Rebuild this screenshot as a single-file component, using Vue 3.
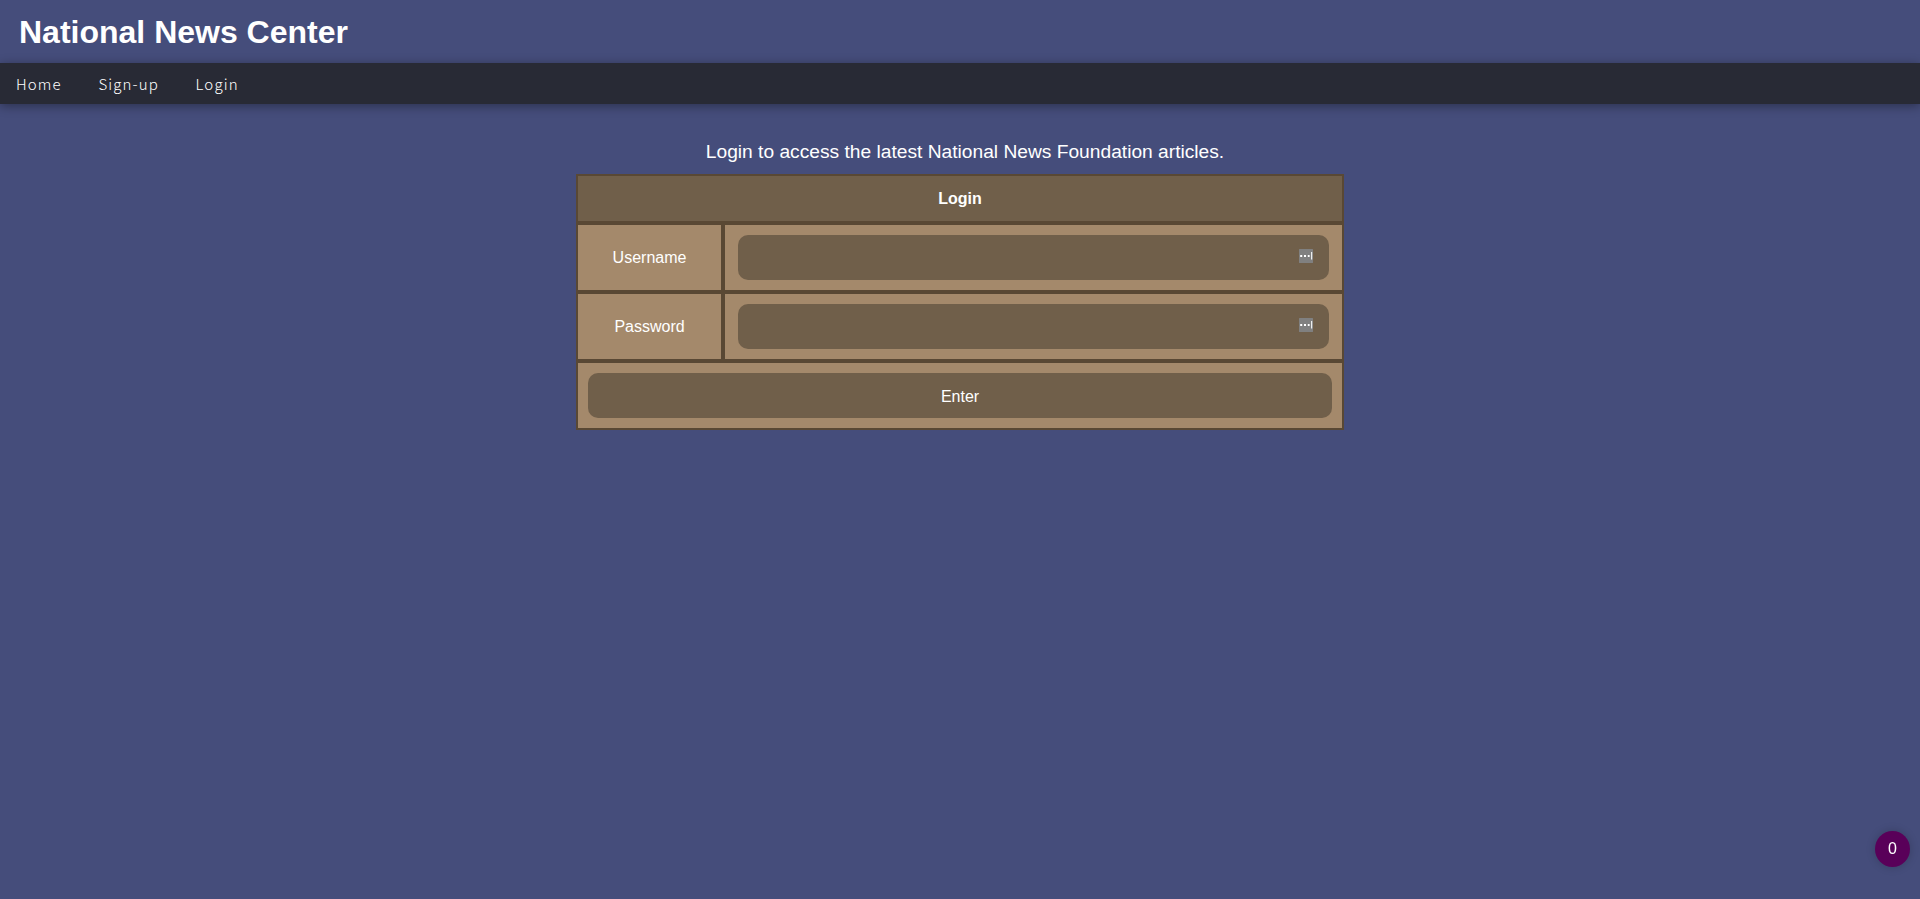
<script setup>
const links = ['Home', 'Sign-up', 'Login']
const fields = [
  { label: 'Username', type: 'text' },
  { label: 'Password', type: 'password' },
]
</script>

<template>
  <div class="page">
    <header class="title"><h1>National News Center</h1></header>
    <nav class="nav">
      <a v-for="link in links" :key="link">{{ link }}</a>
    </nav>
    <main>
      <p class="intro">Login to access the latest National News Foundation articles.</p>
      <form class="panel" @submit.prevent>
        <div class="head">Login</div>
        <template v-for="field in fields" :key="field.label">
          <label class="name">{{ field.label }}</label>
          <div class="cell">
            <div class="field">
              <input :type="field.type" />
              <svg class="key" width="14" height="14" viewBox="0 0 14 14">
                <rect width="14" height="14" rx="0.5" fill="#808080" />
                <path d="M1.2 6h2v2h-2zM5 6h2v2H5zM8.8 6h1.8v2H8.8z" fill="#fff" />
                <path d="M12 3h1.2v7.5H12z" fill="#eee" />
              </svg>
            </div>
          </div>
        </template>
        <div class="action"><button>Enter</button></div>
      </form>
    </main>
    <div class="badge">0</div>
  </div>
</template>

<style>
body { background: #454d7b; }
</style>

<style scoped>
.page {
  min-height: 899px;
  box-sizing: border-box;
  background: #454d7b;
  color: #fff;
  font: 16px/20px "Liberation Sans", Arial, sans-serif;
}
.title { height: 63px; padding-left: 19px; }
h1 { margin: 0; font-size: 32px; line-height: 64px; }
.nav {
  display: flex;
  gap: 36.6px;
  height: 41px;
  padding-left: 16px;
  background: #282a35;
  box-shadow: 0 2px 10px rgba(0, 0, 0, 0.38);
  font: 300 15px/41px "Noto Sans CJK SC", sans-serif;
  letter-spacing: 1.15px;
}
.intro {
  margin: 0;
  padding: 37px 0 11px 10px;
  text-align: center;
  font-size: 19.2px;
  line-height: 22px;
}
.panel {
  display: grid;
  grid-template-columns: 143px 1fr;
  grid-template-rows: 45px 65px 65px 65px;
  gap: 4px;
  width: 768px;
  box-sizing: border-box;
  margin: 0 auto;
  padding: 2px;
  background: #594834;
}
.head {
  grid-column: 1 / -1;
  background: #705f4a;
  text-align: center;
  font-weight: bold;
  line-height: 45px;
}
.name { background: #a4896b; text-align: center; line-height: 65px; }
.cell { background: #a4896b; padding: 10px 13px; }
.field {
  display: flex;
  align-items: center;
  height: 45px;
  box-sizing: border-box;
  padding: 0 16px 3px;
  border-radius: 10px;
  background: #705f4a;
}
input { flex: 1; border: 0; outline: 0; background: none; color: #fff; }
.action { grid-column: 1 / -1; background: #a4896b; padding: 10px; }
button {
  display: block;
  width: 100%;
  height: 45px;
  padding: 2px 0 0;
  border: 0;
  border-radius: 10px;
  background: #705f4a;
  color: #fff;
  font: inherit;
}
.badge {
  position: fixed;
  right: 10px;
  bottom: 32px;
  width: 35px;
  height: 36px;
  border-radius: 50%;
  background: #590059;
  box-shadow: 0 0 10px rgba(0, 0, 0, 0.2);
  text-align: center;
  line-height: 35px;
}
</style>
